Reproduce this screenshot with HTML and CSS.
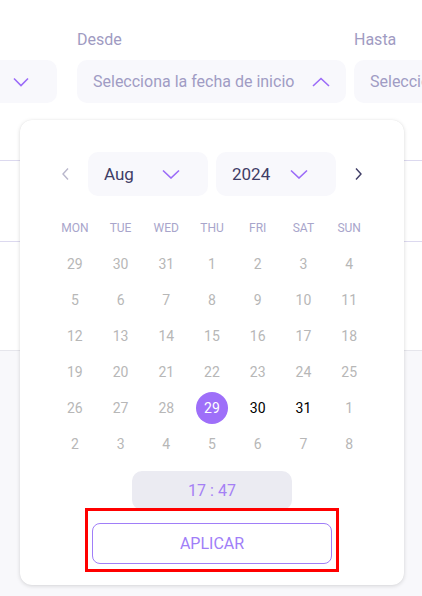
FILE: index.html
```html
<!DOCTYPE html>
<html lang="es">
<head>
    <meta charset="UTF-8">
    <meta name="viewport" content="width=device-width, initial-scale=1.0">
    <title>Filtro de fechas</title>
    <link rel="stylesheet" href="styles.css">
</head>
<body>
    <div class="page">
        <div class="filters">
            <div class="field field-first">
                <label class="field-label">&nbsp;</label>
                <div class="select select-short">
                    <svg class="chev" width="16" height="10" viewBox="0 0 16 10"><path d="M1 1.5 L8 8.5 L15 1.5" fill="none" stroke="#9b6bf8" stroke-width="1.6"/></svg>
                </div>
            </div>
            <div class="field field-from">
                <label class="field-label">Desde</label>
                <div class="select">
                    <span class="placeholder">Selecciona la fecha de inicio</span>
                    <svg class="chev" width="18" height="10" viewBox="0 0 18 10"><path d="M1 9 L9 1.5 L17 9" fill="none" stroke="#9b6bf8" stroke-width="1.6"/></svg>
                </div>
            </div>
            <div class="field field-to">
                <label class="field-label">Hasta</label>
                <div class="select">
                    <span class="placeholder">Selecciona</span>
                </div>
            </div>
        </div>

        <div class="table">
            <div class="table-row"></div>
            <div class="table-row last"></div>
        </div>
        <div class="bottom"></div>

        <div class="picker">
            <div class="picker-nav">
                <svg class="nav-arrow" width="10" height="14" viewBox="0 0 10 14"><path d="M7 1.5 L2 7 L7 12.5" fill="none" stroke="#b9b7cc" stroke-width="1.4"/></svg>
                <div class="dropdown">
                    <span>Aug</span>
                    <svg width="18" height="10" viewBox="0 0 18 10"><path d="M1 1.5 L9 9 L17 1.5" fill="none" stroke="#9b6bf8" stroke-width="1.6"/></svg>
                </div>
                <div class="dropdown">
                    <span>2024</span>
                    <svg width="18" height="10" viewBox="0 0 18 10"><path d="M1 1.5 L9 9 L17 1.5" fill="none" stroke="#9b6bf8" stroke-width="1.6"/></svg>
                </div>
                <svg class="nav-arrow" width="10" height="14" viewBox="0 0 10 14"><path d="M3 1.5 L8 7 L3 12.5" fill="none" stroke="#3f3d66" stroke-width="1.4"/></svg>
            </div>

            <div class="days">
                <div class="wd">MON</div><div class="wd">TUE</div><div class="wd">WED</div><div class="wd">THU</div><div class="wd">FRI</div><div class="wd">SAT</div><div class="wd">SUN</div>
                <div class="day">29</div><div class="day">30</div><div class="day">31</div><div class="day">1</div><div class="day">2</div><div class="day">3</div><div class="day">4</div>
                <div class="day">5</div><div class="day">6</div><div class="day">7</div><div class="day">8</div><div class="day">9</div><div class="day">10</div><div class="day">11</div>
                <div class="day">12</div><div class="day">13</div><div class="day">14</div><div class="day">15</div><div class="day">16</div><div class="day">17</div><div class="day">18</div>
                <div class="day">19</div><div class="day">20</div><div class="day">21</div><div class="day">22</div><div class="day">23</div><div class="day">24</div><div class="day">25</div>
                <div class="day">26</div><div class="day">27</div><div class="day">28</div><div class="day selected"><span>29</span></div><div class="day active">30</div><div class="day active">31</div><div class="day">1</div>
                <div class="day">2</div><div class="day">3</div><div class="day">4</div><div class="day">5</div><div class="day">6</div><div class="day">7</div><div class="day">8</div>
            </div>

            <div class="time">17 : 47</div>

            <div class="apply-wrap">
                <button class="apply">APLICAR</button>
            </div>
        </div>
    </div>
</body>
</html>
```

FILE: styles.css
```css
body {
    margin: 0;
    font-family: Roboto, "Liberation Sans", sans-serif;
    background-color: #fff;
}
.page {
    position: relative;
    width: 422px;
    height: 596px;
    overflow: hidden;
}
.filters {
    display: flex;
    padding-top: 28px;
    white-space: nowrap;
}
.field-label {
    display: block;
    height: 24px;
    font-size: 16px;
    line-height: 24px;
    color: #9f9bc2;
    margin-bottom: 8px;
}
.field-first {
    width: 57px;
    flex-shrink: 0;
    margin-right: 20px;
}
.field-from {
    width: 269px;
    flex-shrink: 0;
    margin-right: 8px;
}
.field-to {
    flex-shrink: 0;
    width: 200px;
}
.select {
    height: 43px;
    background-color: #f8f8fc;
    border-radius: 10px;
    display: flex;
    align-items: center;
    justify-content: space-between;
    padding: 0 16px;
    box-sizing: border-box;
}
.select-short {
    border-radius: 0 10px 10px 0;
    padding: 0 28px 0 0;
    justify-content: flex-end;
}
.placeholder {
    font-size: 16px;
    color: #a09cc4;
}
.table {
    margin-top: 57px;
}
.table-row {
    height: 80px;
    border-top: 1px solid #dcd9ef;
}
.table-row.last {
    height: 108px;
}
.bottom {
    height: 246px;
    background-color: #f8f8fb;
    border-top: 1px solid #e6e6ec;
}

/* date picker popover */
.picker {
    position: absolute;
    left: 20px;
    top: 120px;
    width: 384px;
    height: 465px;
    box-sizing: border-box;
    background-color: #fff;
    border-radius: 12px;
    box-shadow: 0 1px 4px rgba(0, 0, 0, 0.14), 0 0 1px rgba(0, 0, 0, 0.08);
    padding: 32px 32px 0;
}
.picker-nav {
    display: flex;
    align-items: center;
    justify-content: center;
    gap: 8px;
}
.nav-arrow {
    margin: 0 9px;
}
.dropdown {
    width: 120px;
    height: 44px;
    box-sizing: border-box;
    padding: 0 28px 0 16px;
    background-color: #f8f8fc;
    border-radius: 10px;
    display: flex;
    align-items: center;
    justify-content: space-between;
    font-size: 17px;
    color: #3f3d66;
}
.days {
    display: grid;
    grid-template-columns: repeat(7, 1fr);
    grid-auto-rows: 36px;
    margin-top: 14px;
}
.wd {
    display: flex;
    align-items: center;
    justify-content: center;
    font-size: 12px;
    color: #a8a5cb;
}
.day {
    display: flex;
    align-items: center;
    justify-content: center;
    font-size: 14px;
    color: #b7b7b7;
}
.day.active {
    color: #000;
}
.day.selected span {
    width: 32px;
    height: 32px;
    border-radius: 50%;
    background-color: #9e6ff9;
    color: #fff;
    display: flex;
    align-items: center;
    justify-content: center;
}
.time {
    width: 160px;
    height: 39px;
    margin: 9px auto 0;
    background-color: #ebebf2;
    border-radius: 10px;
    display: flex;
    align-items: center;
    justify-content: center;
    font-size: 16px;
    color: #a580f5;
}
.apply-wrap {
    width: 254px;
    height: 64px;
    box-sizing: border-box;
    margin: -2px auto 0;
    border: 3px solid #ff0000;
    padding: 12px 4px 5px;
}
.apply {
    width: 100%;
    height: 100%;
    background-color: #fff;
    border: 1px solid #a07ef8;
    border-radius: 8px;
    font-family: Roboto, "Liberation Sans", sans-serif;
    font-size: 16px;
    color: #a07ef8;
}
```
